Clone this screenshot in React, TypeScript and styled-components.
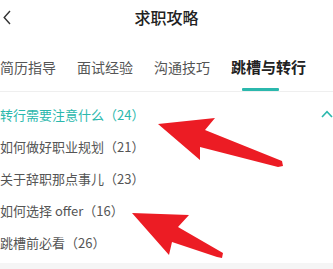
import * as React from "react";
import styled, { createGlobalStyle } from "styled-components";

const GlobalStyle = createGlobalStyle`
    html, body {
        margin: 0;
        padding: 0;
        background: #ffffff;
    }
    body {
        font-family: "Noto Sans CJK SC", "Noto Sans", sans-serif;
        overflow: hidden;
    }
`;

const TEAL = "#2bb8ad";

const Page = styled.div`
    position: relative;
    width: 333px;
    height: 269px;
    overflow: hidden;
    display: flex;
    flex-direction: column;
`;

const Header = styled.div`
    height: 34px;
    display: grid;
    grid-template-columns: 1fr auto 1fr;
    align-items: center;
`;

const Back = styled.div`
    padding-left: 3px;
    display: flex;
    align-items: center;
`;

const Title = styled.div`
    font-size: 16px;
    font-weight: 500;
    color: #222;
    line-height: 20px;
`;

const TabBar = styled.div`
    display: flex;
    gap: 21px;
    padding-top: 23px;
    border-bottom: 1px solid #efefef;
    white-space: nowrap;
`;

const Tab = styled.div<{ $active?: boolean }>`
    display: flex;
    flex-direction: column;
    font-size: ${(p) => (p.$active ? "15px" : "14px")};
    font-weight: ${(p) => (p.$active ? 700 : 400)};
    color: ${(p) => (p.$active ? "#222" : "#555")};
    line-height: 20px;
`;

const Underline = styled.div<{ $show?: boolean }>`
    margin-top: 11px;
    margin-left: 11px;
    width: 37px;
    height: 3px;
    border-radius: 1px;
    background: ${(p) => (p.$show ? TEAL : "transparent")};
`;

const List = styled.div`
    padding: 6px 0 5px;
    display: flex;
    flex-direction: column;
`;

const Item = styled.div<{ $open?: boolean }>`
    height: 32px;
    display: flex;
    align-items: center;
    justify-content: space-between;
    font-size: 13px;
    color: ${(p) => (p.$open ? TEAL : "#555")};
    white-space: nowrap;
`;

const Footer = styled.div`
    flex: 1;
    background: #f5f5f5;
`;

const Overlay = styled.svg`
    position: absolute;
    left: 0;
    top: 0;
    pointer-events: none;
`;

const items = [
    "转行需要注意什么（24）",
    "如何做好职业规划（21）",
    "关于辞职那点事儿（23）",
    "如何选择 offer（16）",
    "跳槽前必看（26）",
];

const tabs = ["简历指导", "面试经验", "沟通技巧", "跳槽与转行"];

export default function App() {
    return (
        <Page>
            <GlobalStyle />
            <Header>
                <Back>
                    <svg width="8" height="15" viewBox="0 0 8 15">
                        <path
                            d="M7 1 L1.2 7.5 L7 14"
                            fill="none"
                            stroke="#333"
                            strokeWidth="1.4"
                        />
                    </svg>
                </Back>
                <Title>求职攻略</Title>
                <div />
            </Header>
            <TabBar>
                {tabs.map((t, i) => (
                    <Tab key={t} $active={i === 3}>
                        {t}
                        <Underline $show={i === 3} />
                    </Tab>
                ))}
            </TabBar>
            <List>
                {items.map((t, i) => (
                    <Item key={t} $open={i === 0}>
                        {t}
                        {i === 0 && (
                            <svg
                                width="12"
                                height="8"
                                viewBox="0 0 12 8"
                                style={{ marginRight: 0 }}
                            >
                                <path
                                    d="M1 7 L6 1.6 L11 7"
                                    fill="none"
                                    stroke={TEAL}
                                    strokeWidth="1.6"
                                />
                            </svg>
                        )}
                    </Item>
                ))}
            </List>
            <Footer />
            <Overlay width="333" height="269" viewBox="0 0 333 269">
                <polygon
                    points="158,124 215,118 205,130 282,161 283,166 278,167 200,147 200,160"
                    fill="#ec1c24"
                />
                <polygon
                    points="132,213 189,215 178,227 223,253 222,258 217,257 172,242 169,255"
                    fill="#ec1c24"
                />
            </Overlay>
        </Page>
    );
}
